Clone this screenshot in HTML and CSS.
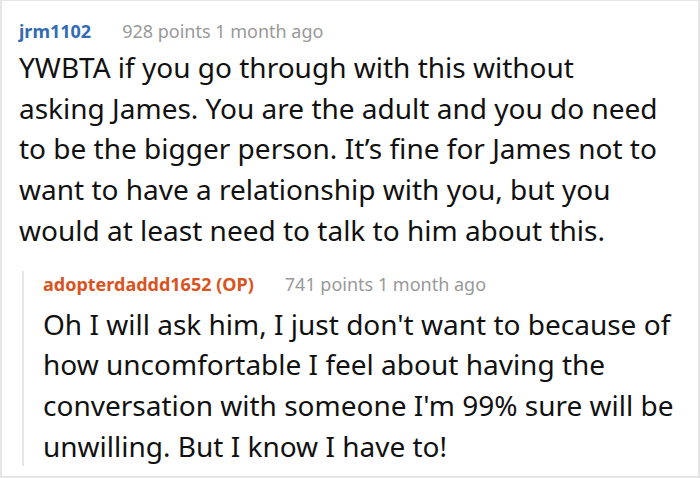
FILE: index.html
```html
<!DOCTYPE html>
<html>
<head>
<meta charset="utf-8">
<link rel="stylesheet" href="styles.css">
</head>
<body>
<div class="thread">
  <div class="comment">
    <div class="meta"><span class="user">jrm1102</span><span class="info">928 points 1 month ago</span></div>
    <p class="text main">YWBTA if you go through with this without asking James. You are the adult and you do need to be the bigger person. It’s fine for James not to want to have a relationship with you, but you would at least need to talk to him about this.</p>
    <div class="reply">
      <div class="meta"><span class="user op">adopterdaddd1652 (OP)</span><span class="info">741 points 1 month ago</span></div>
      <p class="text">Oh I will ask him, I just don't want to because of how uncomfortable I feel about having the conversation with someone I'm 99% sure will be unwilling. But I know I have to!</p>
    </div>
  </div>
</div>
</body>
</html>
```
FILE: styles.css
```css
html, body { margin: 0; padding: 0; background: #fff; }
.thread {
  width: 700px;
  height: 478px;
  box-sizing: border-box;
  border: 2px solid #e6e6e6;
  border-top-width: 1px;
  font-family: "Noto Sans", "Open Sans", sans-serif;
  font-stretch: 87.5%;
  color: #111;
  overflow: hidden;
}
.comment { padding: 17px 10px 0 17px; }
.meta { display: flex; gap: 31px; font-size: 18px; line-height: 26px; }
.user { font-weight: 700; color: #336ab4; }
.user.op { color: #d9531e; }
.info { color: #999; }
.text { margin: 3px 0 0; font-size: 28px; line-height: 40.7px; }
.text.main { max-width: 642px; }
.reply { margin: 20px 0 0 3px; padding: 0 0 0 19px; border-left: 2px solid #e6e6e6; }
.reply .text { margin-top: 7px; }
```
